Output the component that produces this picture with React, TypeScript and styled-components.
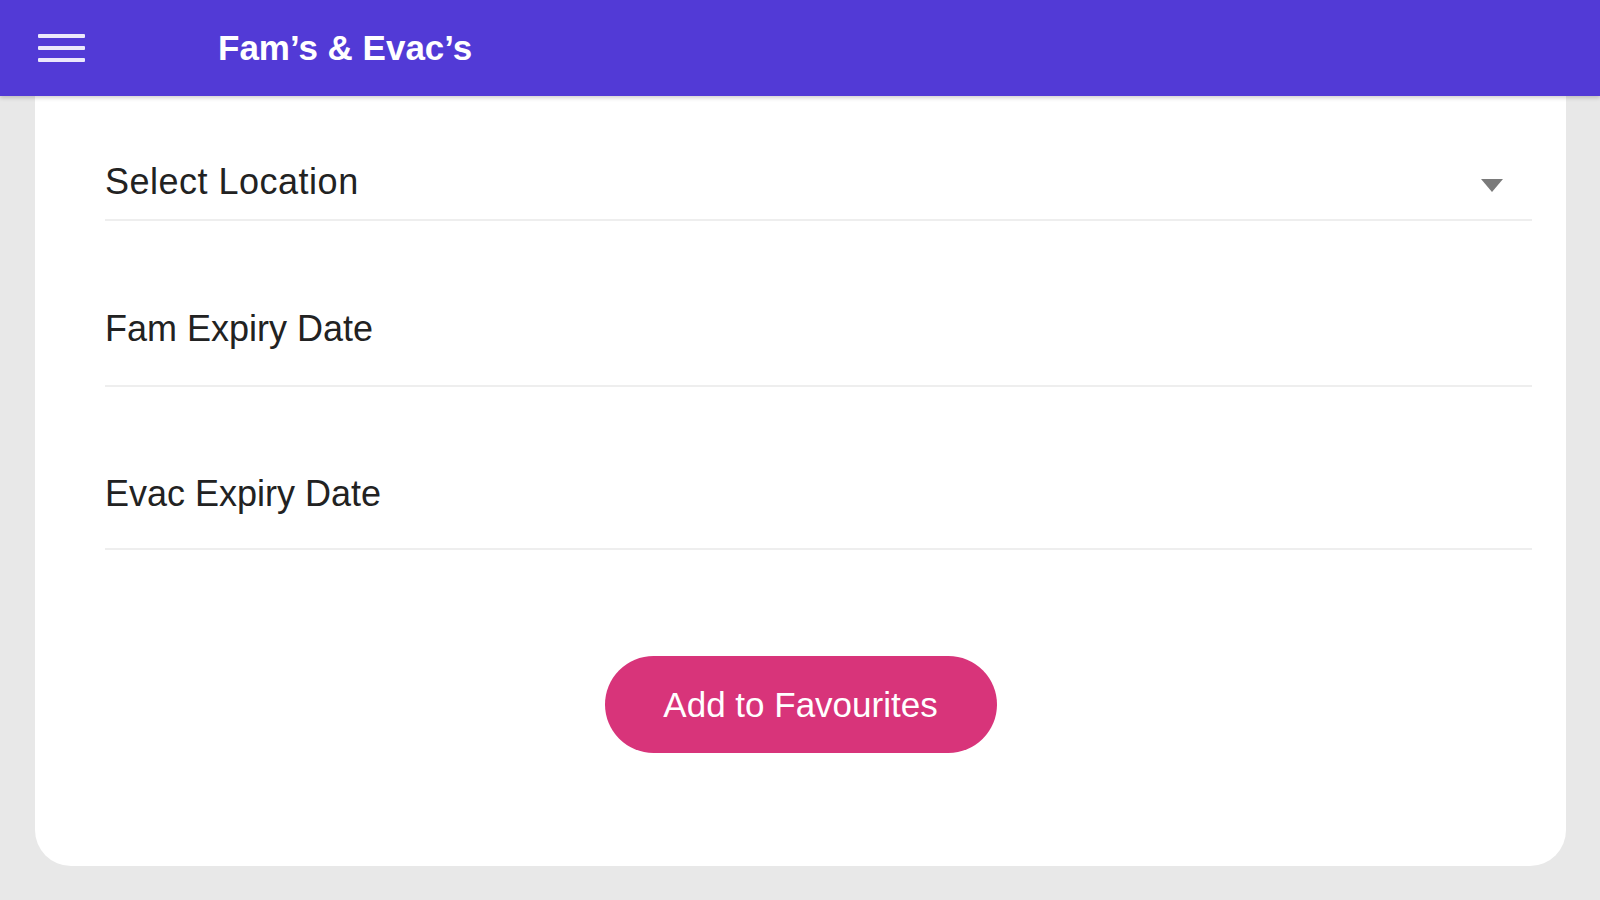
import React from "react";
import styled, { createGlobalStyle } from "styled-components";

const GlobalStyle = createGlobalStyle`
  html, body {
    margin: 0;
    padding: 0;
    background-color: #e8e8e8;
    font-family: "Liberation Sans", Arial, sans-serif;
  }
`;

const Page = styled.div`
  width: 100%;
  min-height: 100vh;
  display: flex;
  flex-direction: column;
`;

const Header = styled.header`
  height: 96px;
  display: flex;
  align-items: center;
  padding-left: 38px;
  background-color: #523ad6;
  box-shadow: 0 2px 4px rgba(0, 0, 0, 0.18);
  position: relative;
  z-index: 1;
`;

const MenuButton = styled.button`
  width: 47px;
  height: 28px;
  padding: 0;
  border: none;
  background: none;
  display: flex;
  flex-direction: column;
  justify-content: space-between;
  margin-right: 133px;
  cursor: pointer;

  span {
    display: block;
    height: 4px;
    border-radius: 1px;
    background-color: #ebe8fb;
  }
`;

const Title = styled.h1`
  margin: 0;
  font-size: 35px;
  font-weight: 700;
  color: #fff;
`;

const Card = styled.main`
  margin: 0 34px 33px 35px;
  padding: 0 34px 113px 70px;
  background-color: #fff;
  border-radius: 0 0 36px 36px;
  display: flex;
  flex-direction: column;
`;

const Field = styled.div<{ $height: number; $bottom: number }>`
  height: ${(p) => p.$height}px;
  box-sizing: border-box;
  padding-bottom: ${(p) => p.$bottom}px;
  display: flex;
  align-items: flex-end;
  justify-content: space-between;
  border-bottom: 2px solid #eeeeee;
`;

const Label = styled.span<{ $wide?: boolean }>`
  font-size: 36px;
  line-height: 36px;
  color: #222;
  letter-spacing: ${(p) => (p.$wide ? "0.5px" : "0")};
`;

const Caret = styled.svg`
  width: 22px;
  height: 13px;
  margin-right: 29px;
  margin-bottom: 8px;
`;

const Actions = styled.div`
  display: flex;
  justify-content: center;
  padding-top: 106px;
  padding-right: 36px;
`;

const FavButton = styled.button`
  width: 392px;
  height: 97px;
  border: none;
  border-radius: 49px;
  background-color: #d8347a;
  color: #fff;
  font-family: "Liberation Sans", Arial, sans-serif;
  font-size: 35px;
  cursor: pointer;
`;

const App = () => {
  return (
    <Page>
      <GlobalStyle />
      <Header>
        <MenuButton aria-label="menu">
          <span />
          <span />
          <span />
        </MenuButton>
        <Title>Fam’s &amp; Evac’s</Title>
      </Header>
      <Card>
        <Field $height={125} $bottom={19}>
          <Label $wide>Select Location</Label>
          <Caret viewBox="0 0 22 13">
            <path d="M0 0 L22 0 L11 13 Z" fill="#7a7a7a" />
          </Caret>
        </Field>
        <Field $height={166} $bottom={38}>
          <Label>Fam Expiry Date</Label>
        </Field>
        <Field $height={163} $bottom={36}>
          <Label>Evac Expiry Date</Label>
        </Field>
        <Actions>
          <FavButton>Add to Favourites</FavButton>
        </Actions>
      </Card>
    </Page>
  );
};

export default App;
